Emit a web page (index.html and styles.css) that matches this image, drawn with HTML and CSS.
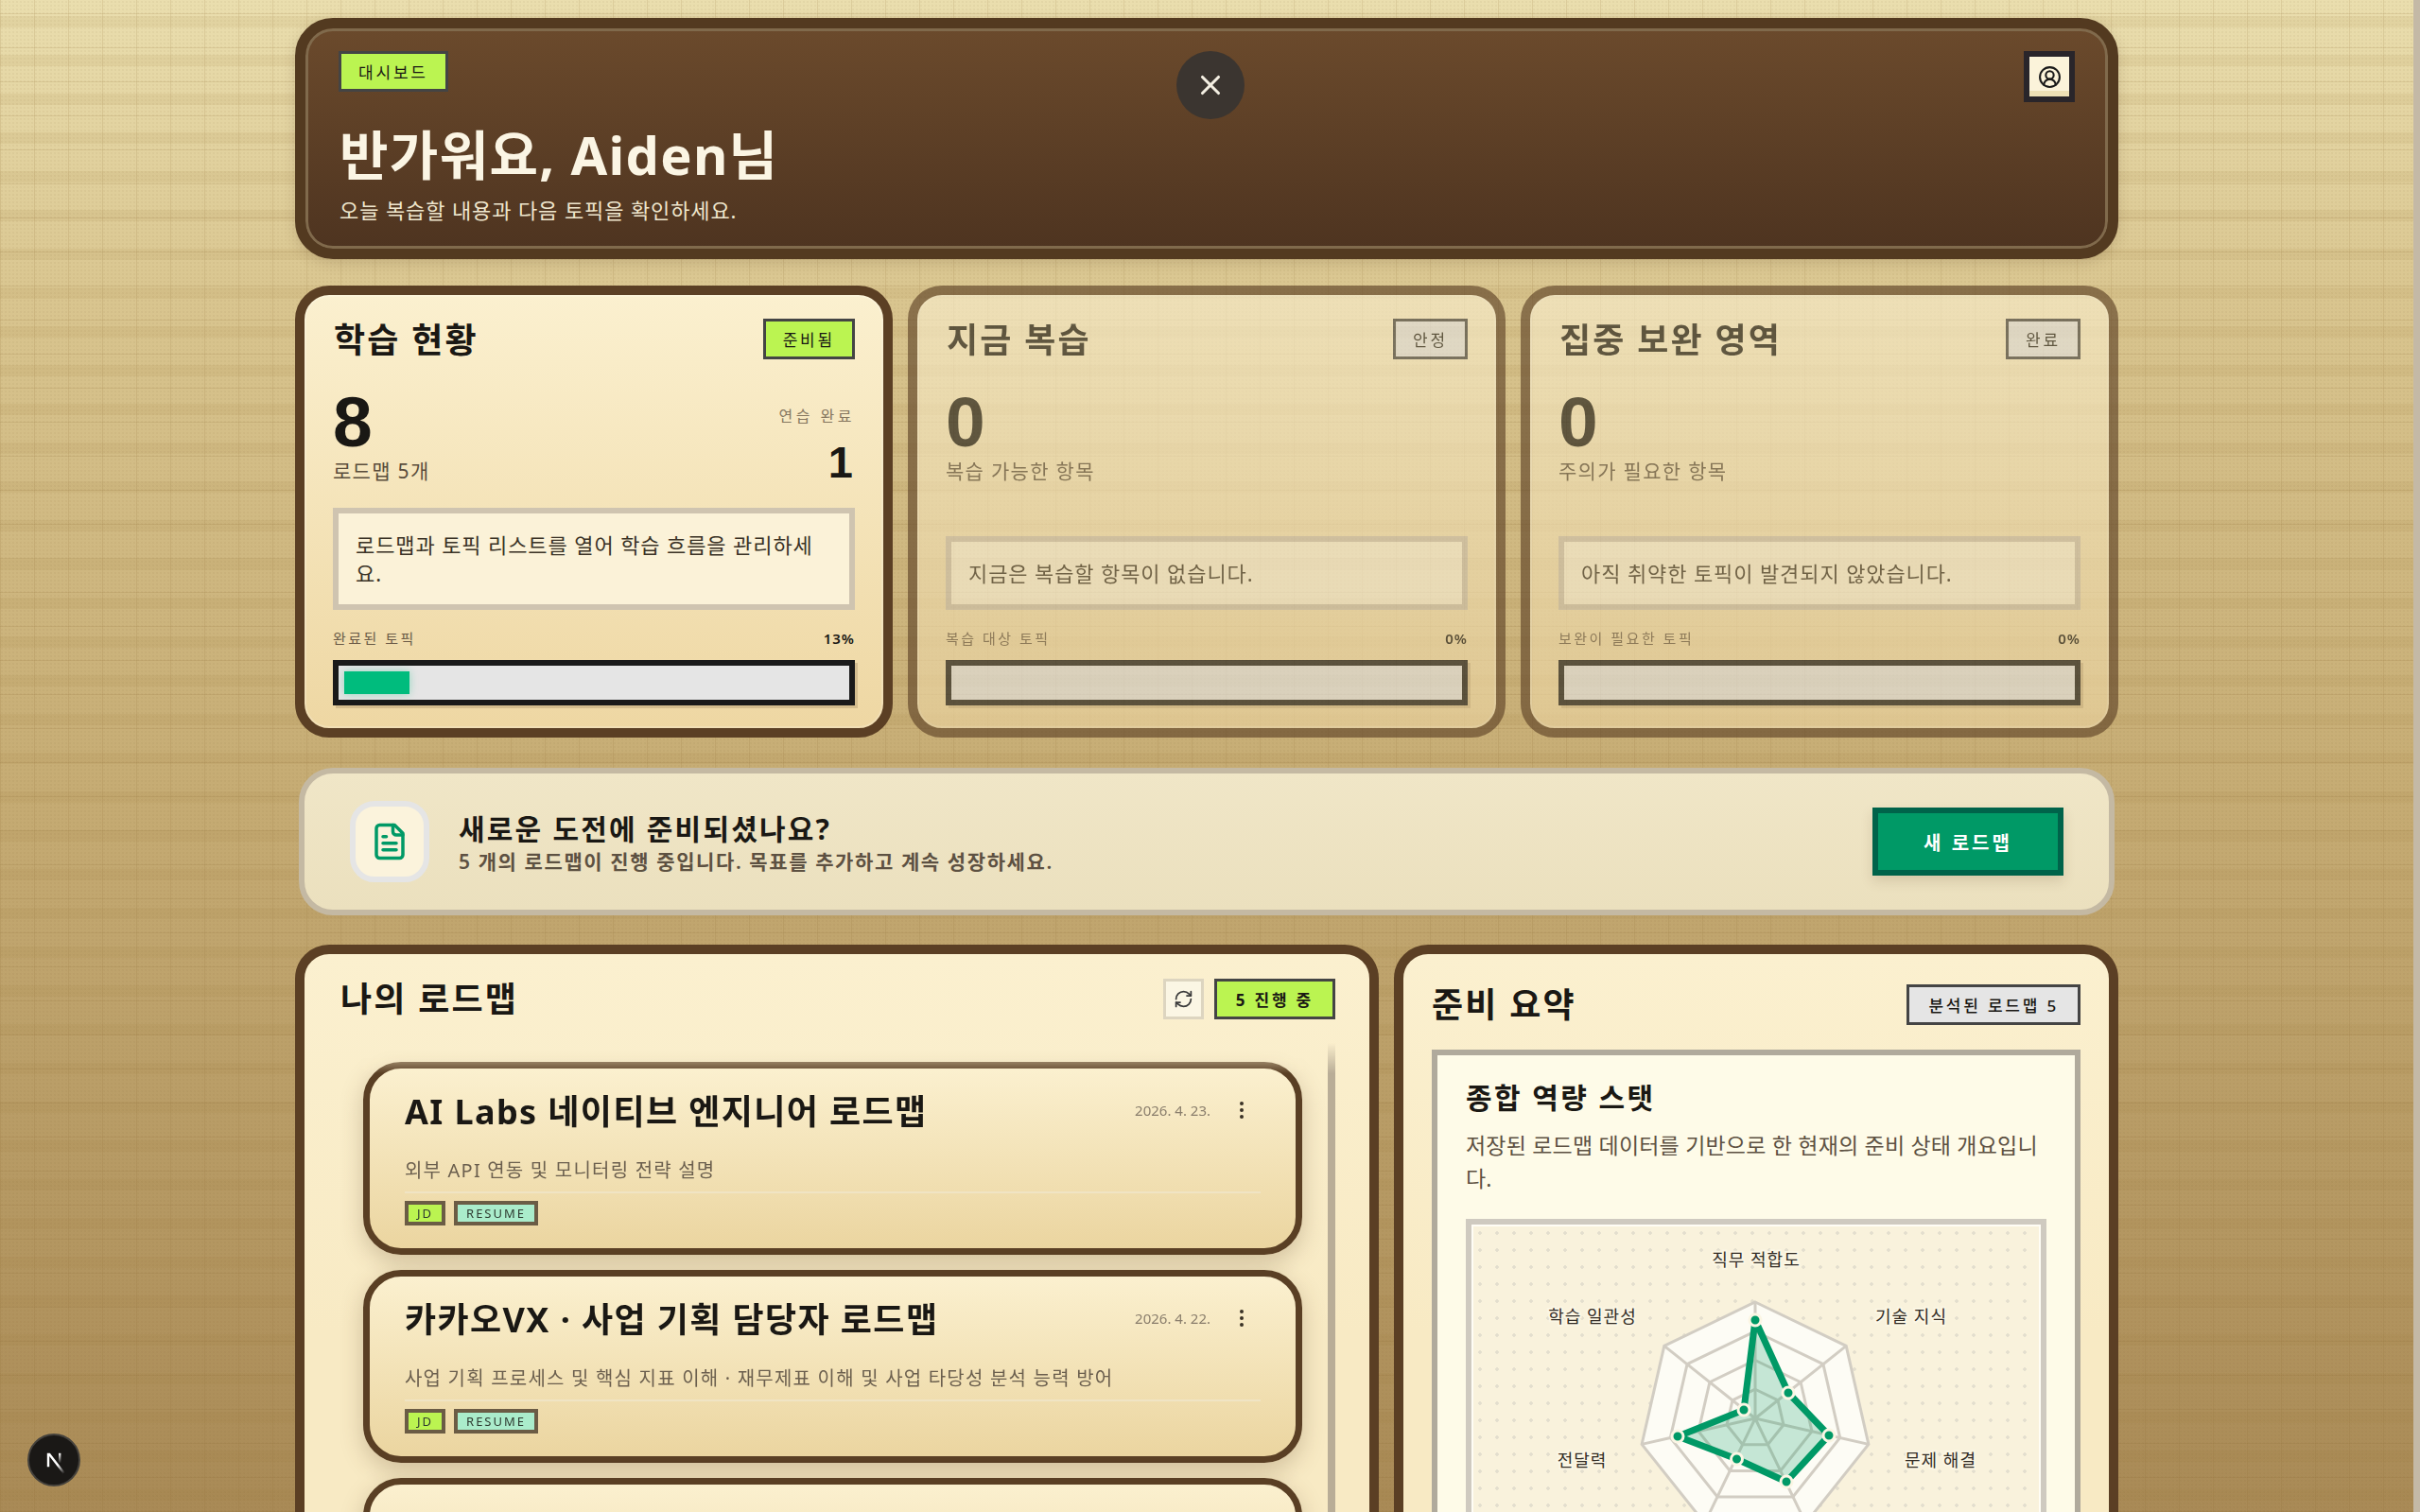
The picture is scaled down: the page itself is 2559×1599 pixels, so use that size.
FILE: index.html
```html
<!DOCTYPE HTML>
<html lang="ko">
<head>
    <meta charset="utf-8"/>
    <title>대시보드</title>
    <link rel="stylesheet" href="styles.css">
</head>
<body>
<div class="viewport">
    <div class="page">
        <header class="hero">
            <div>
                <span class="tag tag-lime">대시보드</span>
                <h1 class="hero-title">반가워요, Aiden님</h1>
                <p class="hero-sub">오늘 복습할 내용과 다음 토픽을 확인하세요.</p>
            </div>
            <button class="profile-btn" aria-label="프로필">
                <svg viewBox="0 0 24 24" width="25" height="25" fill="none" stroke="#1a1a1a" stroke-width="2" stroke-linecap="round" stroke-linejoin="round">
                    <path d="M18 20a6 6 0 0 0-12 0"/>
                    <circle cx="12" cy="10" r="4"/>
                    <circle cx="12" cy="12" r="10"/>
                </svg>
            </button>
        </header>

        <section class="stat-grid">
            <article class="stat-card">
                <div class="card-head">
                    <h2 class="card-title">학습 현황</h2>
                    <span class="tag tag-lime">준비됨</span>
                </div>
                <div class="stat-row">
                    <div>
                        <div class="big-num">8</div>
                        <div class="stat-label">로드맵 5개</div>
                    </div>
                    <div class="stat-side">
                        <div class="side-label">연습 완료</div>
                        <div class="side-num">1</div>
                    </div>
                </div>
                <p class="stat-msg">로드맵과 토픽 리스트를 열어 학습 흐름을 관리하세요.</p>
                <div class="progress-row"><span>완료된 토픽</span><b>13%</b></div>
                <div class="progress"><div class="progress-fill" style="width: 13%"></div></div>
            </article>

            <article class="stat-card is-muted">
                <div class="card-head">
                    <h2 class="card-title">지금 복습</h2>
                    <span class="tag tag-gray">안정</span>
                </div>
                <div class="stat-row">
                    <div>
                        <div class="big-num">0</div>
                        <div class="stat-label">복습 가능한 항목</div>
                    </div>
                </div>
                <p class="stat-msg">지금은 복습할 항목이 없습니다.</p>
                <div class="progress-row"><span>복습 대상 토픽</span><b>0%</b></div>
                <div class="progress"></div>
            </article>

            <article class="stat-card is-muted">
                <div class="card-head">
                    <h2 class="card-title">집중 보완 영역</h2>
                    <span class="tag tag-gray">완료</span>
                </div>
                <div class="stat-row">
                    <div>
                        <div class="big-num">0</div>
                        <div class="stat-label">주의가 필요한 항목</div>
                    </div>
                </div>
                <p class="stat-msg">아직 취약한 토픽이 발견되지 않았습니다.</p>
                <div class="progress-row"><span>보완이 필요한 토픽</span><b>0%</b></div>
                <div class="progress"></div>
            </article>
        </section>

        <section class="cta">
            <div class="cta-icon">
                <svg viewBox="0 0 24 24" width="42" height="42" fill="none" stroke="#009966" stroke-width="2" stroke-linecap="round" stroke-linejoin="round">
                    <path d="M15 2H6a2 2 0 0 0-2 2v16a2 2 0 0 0 2 2h12a2 2 0 0 0 2-2V7Z"/>
                    <path d="M14 2v4a2 2 0 0 0 2 2h4"/>
                    <path d="M10 9H8"/>
                    <path d="M16 13H8"/>
                    <path d="M16 17H8"/>
                </svg>
            </div>
            <div class="cta-text">
                <h2 class="cta-title">새로운 도전에 준비되셨나요?</h2>
                <p class="cta-sub">5 개의 로드맵이 진행 중입니다. 목표를 추가하고 계속 성장하세요.</p>
            </div>
            <button class="cta-btn">새 로드맵</button>
        </section>

        <section class="main-grid">
            <div class="panel panel-list">
                <div class="panel-head">
                    <h2 class="panel-title">나의 로드맵</h2>
                    <div class="panel-tools">
                        <button class="refresh-btn" aria-label="새로고침">
                            <svg viewBox="0 0 24 24" width="21" height="21" fill="none" stroke="#3a3a3a" stroke-width="2" stroke-linecap="round" stroke-linejoin="round">
                                <path d="M3 12a9 9 0 0 1 9-9 9.75 9.75 0 0 1 6.74 2.74L21 8"/>
                                <path d="M21 3v5h-5"/>
                                <path d="M21 12a9 9 0 0 1-9 9 9.75 9.75 0 0 1-6.74-2.74L3 16"/>
                                <path d="M8 16H3v5"/>
                            </svg>
                        </button>
                        <span class="tag tag-lime tag-bold">5 진행 중</span>
                    </div>
                </div>
                <div class="scroller">
                    <div class="roadmap-list">
                        <article class="roadmap">
                            <div class="roadmap-top">
                                <h3 class="roadmap-title">AI Labs 네이티브 엔지니어 로드맵</h3>
                                <div class="roadmap-meta">
                                    <span class="roadmap-date">2026. 4. 23.</span>
                                    <span class="dots"><i></i><i></i><i></i></span>
                                </div>
                            </div>
                            <p class="roadmap-desc">외부 API 연동 및 모니터링 전략 설명</p>
                            <div class="roadmap-tags">
                                <span class="mini-tag mini-jd">JD</span>
                                <span class="mini-tag mini-resume">RESUME</span>
                            </div>
                        </article>
                        <article class="roadmap">
                            <div class="roadmap-top">
                                <h3 class="roadmap-title">카카오VX · 사업 기획 담당자 로드맵</h3>
                                <div class="roadmap-meta">
                                    <span class="roadmap-date">2026. 4. 22.</span>
                                    <span class="dots"><i></i><i></i><i></i></span>
                                </div>
                            </div>
                            <p class="roadmap-desc">사업 기획 프로세스 및 핵심 지표 이해 · 재무제표 이해 및 사업 타당성 분석 능력 방어</p>
                            <div class="roadmap-tags">
                                <span class="mini-tag mini-jd">JD</span>
                                <span class="mini-tag mini-resume">RESUME</span>
                            </div>
                        </article>
                        <article class="roadmap roadmap-empty"></article>
                    </div>
                    <div class="scroll-track"></div>
                </div>
            </div>

            <div class="panel panel-summary">
                <div class="panel-head summary-head">
                    <h2 class="panel-title">준비 요약</h2>
                    <span class="tag tag-neutral">분석된 로드맵 5</span>
                </div>
                <div class="summary-box">
                    <h3 class="summary-title">종합 역량 스탯</h3>
                    <p class="summary-desc">저장된 로드맵 데이터를 기반으로 한 현재의 준비 상태 개요입니다.</p>
                    <div class="radar-box">
                        <svg class="radar" viewBox="0 0 602 470" width="602" height="470">
                            <polygon class="ring ring-outer" points="300,82 396.2,128.3 419.9,232.4 353.4,315.8 246.6,315.8 180.1,232.4 203.8,128.3"/>
                            <polygon class="ring" points="300,113 371.9,147.6 389.7,225.5 339.9,287.9 260.1,287.9 210.3,225.5 228.1,147.6"/>
                            <polygon class="ring" points="300,143.5 348.1,166.7 360,218.7 326.7,260.4 273.3,260.4 240,218.7 251.9,166.7"/>
                            <polygon class="ring" points="300,174.25 324,185.8 330,211.8 313.3,232.7 286.7,232.7 270,211.8 276,185.8"/>
                            <path class="ring" d="M300 205L300 82M300 205L396.2 128.3M300 205L419.9 232.4M300 205L353.4 315.8M300 205L246.6 315.8M300 205L180.1 232.4M300 205L203.8 128.3"/>
                            <polygon class="radar-shape" points="300,101 335,178 378,223 333,272 280.5,248 218,224 288,196"/>
                            <g class="radar-dots">
                                <circle cx="300" cy="101" r="6"/>
                                <circle cx="335" cy="178" r="6"/>
                                <circle cx="378" cy="223" r="6"/>
                                <circle cx="333" cy="272" r="6"/>
                                <circle cx="280.5" cy="248" r="6"/>
                                <circle cx="218" cy="224" r="6"/>
                                <circle cx="288" cy="196" r="6"/>
                            </g>
                            <g class="radar-labels">
                                <text x="301" y="44">직무 적합도</text>
                                <text x="465" y="104">기술 지식</text>
                                <text x="496" y="256">문제 해결</text>
                                <text x="117" y="256">전달력</text>
                                <text x="128" y="104">학습 일관성</text>
                            </g>
                        </svg>
                    </div>
                </div>
            </div>
        </section>
    </div>
    <div class="page-scrollbar"></div>
</div>

<button class="close-btn" aria-label="닫기">
    <svg viewBox="0 0 24 24" width="34" height="34" fill="none" stroke="#f4efe2" stroke-width="2.2" stroke-linecap="round" stroke-linejoin="round">
        <path d="M18 6 6 18"/>
        <path d="m6 6 12 12"/>
    </svg>
</button>

<div class="next-badge">
    <svg viewBox="0 0 180 180" width="36" height="36">
        <defs>
            <linearGradient id="nextA" x1="109" y1="116.5" x2="144.5" y2="160.5" gradientUnits="userSpaceOnUse">
                <stop stop-color="#fff"/>
                <stop offset="1" stop-color="#fff" stop-opacity="0"/>
            </linearGradient>
            <linearGradient id="nextB" x1="121" y1="54" x2="120.8" y2="106.9" gradientUnits="userSpaceOnUse">
                <stop stop-color="#fff"/>
                <stop offset="1" stop-color="#fff" stop-opacity="0"/>
            </linearGradient>
        </defs>
        <path fill="url(#nextA)" d="M149.508 157.52L69.142 54H54v71.97h12.114V69.384l73.885 95.461a90.304 90.304 0 0 0 9.509-7.325z"/>
        <rect fill="url(#nextB)" x="115" y="54" width="12" height="72"/>
    </svg>
</div>
</body>
</html>
```

FILE: styles.css
```css
* {
    box-sizing: border-box;
}

html, body {
    margin: 0;
    padding: 0;
    height: 1599px;
    overflow: hidden;
}

body {
    font-family: "Noto Sans", "Noto Sans CJK KR", sans-serif;
    color: #1a1814;
}

h1, h2, h3, p {
    margin: 0;
}

button {
    font: inherit;
    padding: 0;
}

.viewport {
    display: flex;
    height: 1599px;
    overflow: hidden;
    background:
        radial-gradient(circle, rgba(120, 90, 40, .06) 1px, transparent 1px) 0 0 / 4px 4px,
        repeating-linear-gradient(90deg, rgba(140, 105, 50, .15) 0 1px, transparent 1px 36px),
        repeating-linear-gradient(0deg, rgba(140, 105, 50, .15) 0 1px, transparent 1px 36px),
        repeating-linear-gradient(180deg, transparent 0 17px, rgba(150, 115, 50, .09) 17px 29px, transparent 29px 41px),
        linear-gradient(180deg, #eadeae 0%, #d9c58f 20%, #c6ac74 52%, #a98a56 100%);
}

.page {
    flex: 1;
    min-width: 0;
    padding: 19px 312px 0;
}

.page-scrollbar {
    width: 7px;
    background: #c4b9a6;
}

/* hero */
.hero {
    display: flex;
    justify-content: space-between;
    align-items: flex-start;
    height: 255px;
    padding: 24px 35px;
    border: 11px solid #533a20;
    border-radius: 40px;
    background: linear-gradient(180deg, #6b4a2c 0%, #4e3420 100%);
    box-shadow: inset 0 0 0 3px #806a4c, 0 4px 14px rgba(90, 63, 36, .18);
}

.hero-title {
    margin-top: 30px;
    padding-left: 1px;
    font-size: 56px;
    line-height: 72px;
    font-weight: 700;
    letter-spacing: 1.3px;
    color: #fbf5e4;
}

.hero-sub {
    margin-top: 7px;
    padding-left: 1px;
    font-size: 22px;
    line-height: 32px;
    letter-spacing: .9px;
    color: #efe6cd;
}

.profile-btn {
    display: flex;
    align-items: center;
    justify-content: center;
    width: 54px;
    height: 54px;
    border: 6px solid #29252a;
    background: linear-gradient(180deg, #fbf3da 0 85%, #eee0b5 85%);
}

.close-btn {
    position: fixed;
    top: 54px;
    left: 1244px;
    display: flex;
    align-items: center;
    justify-content: center;
    width: 72px;
    height: 72px;
    border: none;
    border-radius: 50%;
    background: #3b3530;
}

.next-badge {
    position: fixed;
    left: 29px;
    top: 1516px;
    display: flex;
    align-items: center;
    justify-content: center;
    width: 56px;
    height: 56px;
    border: 2px solid #45423d;
    border-radius: 50%;
    background: #1a1816;
}

/* tags */
.tag {
    display: inline-flex;
    align-items: center;
    justify-content: center;
    height: 43px;
    padding: 0 18px;
    border: 3px solid #444;
    font-size: 17px;
    letter-spacing: 2.8px;
    white-space: nowrap;
}

.tag-lime {
    background: #bbf451;
    color: #1a1814;
}

.tag-gray {
    background: #e5e5e5;
    color: #1a1814;
}

.tag-neutral {
    padding: 0 20px;
    background: #e5e5e5;
    color: #1a1814;
    font-weight: 500;
}

.tag-bold {
    padding: 0 20px;
    font-weight: 700;
}

/* stat cards */
.stat-grid {
    display: grid;
    grid-template-columns: repeat(3, 1fr);
    gap: 16px;
    margin-top: 28px;
}

.stat-card {
    display: flex;
    flex-direction: column;
    height: 478px;
    padding: 24px 30px;
    border: 10px solid #5b3f24;
    border-radius: 36px;
    background: linear-gradient(180deg, #fbf0cf 0%, #eed7a3 100%);
    box-shadow: inset 0 0 0 2px rgba(255, 255, 255, .2);
}

.stat-card.is-muted {
    opacity: .62;
}

.card-head {
    display: flex;
    justify-content: space-between;
    align-items: center;
}

.card-title {
    padding: 2px 0 0 1px;
    font-size: 36px;
    line-height: 43px;
    font-weight: 700;
    letter-spacing: 2.2px;
}

.stat-row {
    display: flex;
    justify-content: space-between;
    align-items: flex-end;
    margin-top: 29px;
}

.big-num {
    font-family: "Liberation Sans", "Noto Sans", sans-serif;
    font-size: 75px;
    line-height: 72px;
    font-weight: 700;
}

.stat-label {
    margin-top: 2px;
    font-size: 21px;
    line-height: 28px;
    letter-spacing: 1.3px;
    color: #5a4d3c;
}

.stat-side {
    text-align: right;
    transform: translateY(5px);
}

.side-label {
    font-size: 16px;
    letter-spacing: 3.5px;
    color: #85765f;
}

.side-num {
    margin-top: 10px;
    padding-right: 2px;
    font-family: "Liberation Sans", "Noto Sans", sans-serif;
    font-size: 47px;
    line-height: 56px;
    font-weight: 700;
}

.stat-msg {
    margin-top: auto;
    padding: 18px;
    border: 6px solid #cfc4b0;
    background: #fbf2d8;
    font-size: 22px;
    line-height: 30px;
    letter-spacing: .9px;
    color: #3a3226;
}

.progress-row {
    display: flex;
    justify-content: space-between;
    margin-top: 16px;
    font-size: 15px;
    line-height: 28px;
    letter-spacing: 2.5px;
    color: #6b5b47;
}

.progress-row b {
    font-weight: 600;
    letter-spacing: 1px;
    color: #1a1814;
}

.progress {
    height: 48px;
    margin-top: 9px;
    padding: 6px;
    border: 6px solid #1a1a1a;
    background: #e5e5e5;
    box-shadow: 3px 3px 0 rgba(90, 63, 36, .18);
}

.progress-fill {
    height: 100%;
    background: #00bc7d;
    box-shadow: 0 0 8px rgba(0, 188, 125, .35);
}

/* cta */
.cta {
    display: flex;
    align-items: center;
    height: 156px;
    margin: 32px 4px 0;
    padding: 0 48px;
    border: 6px solid #c4b9a3;
    border-radius: 36px;
    background: linear-gradient(180deg, #f0e6c7 0%, #ebe0be 100%);
}

.cta-icon {
    display: flex;
    align-items: center;
    justify-content: center;
    width: 84px;
    height: 86px;
    border: 6px solid #e5e5e5;
    border-radius: 26px;
    background: #fbf3dc;
}

.cta-text {
    flex: 1;
    margin-left: 31px;
    padding-top: 2px;
}

.cta-title {
    font-size: 30px;
    line-height: 40px;
    font-weight: 700;
    letter-spacing: 2.2px;
}

.cta-sub {
    font-size: 21px;
    line-height: 28px;
    font-weight: 600;
    letter-spacing: 1.6px;
    color: #5d5142;
}

.cta-btn {
    width: 202px;
    height: 72px;
    border: 6px solid #00634a;
    background: #009966;
    color: #fff;
    font-size: 20px;
    font-weight: 700;
    letter-spacing: 3px;
    box-shadow: 0 6px 12px rgba(90, 63, 36, .15);
}

/* panels */
.main-grid {
    display: grid;
    grid-template-columns: 3fr 2fr;
    gap: 16px;
    margin-top: 31px;
}

.panel {
    height: 900px;
    border: 10px solid #5b3f24;
    border-radius: 36px;
    background: linear-gradient(180deg, #fbf0cf 0, #f8eac4 400px);
}

.panel-head {
    display: flex;
    justify-content: space-between;
    align-items: center;
}

.panel-list {
    padding: 25px 36px 0 38px;
}

.panel-summary {
    padding: 31px 30px 0;
}

.panel-title {
    padding-top: 2px;
    font-size: 36px;
    line-height: 42px;
    font-weight: 700;
    letter-spacing: 2.2px;
}

.panel-tools {
    display: flex;
    gap: 11px;
}

.refresh-btn {
    display: flex;
    align-items: center;
    justify-content: center;
    width: 43px;
    height: 43px;
    border: 3px solid #ddd5c0;
    background: #fbf6e4;
}

.scroller {
    display: flex;
    margin-top: 25px;
    -webkit-mask-image: linear-gradient(180deg, transparent 0, #000 32px);
    mask-image: linear-gradient(180deg, transparent 0, #000 32px);
}

.roadmap-list {
    flex: 1;
    display: flex;
    flex-direction: column;
    gap: 16px;
    padding: 20px 27px 0 24px;
}

.scroll-track {
    width: 8px;
    background: #b9ad97;
}

.roadmap {
    height: 204px;
    padding: 21px 37px 0;
    border: 7px solid #5a3f24;
    border-radius: 40px;
    background: linear-gradient(180deg, #fbf0cf 0%, #ebd5a0 100%);
    box-shadow: 0 8px 24px rgba(90, 63, 36, .25);
}

.roadmap-top {
    display: flex;
    justify-content: space-between;
}

.roadmap-title {
    font-size: 36px;
    line-height: 50px;
    font-weight: 700;
    letter-spacing: 1.4px;
}

.roadmap-meta {
    display: flex;
    align-items: center;
    gap: 31px;
    height: 46px;
    padding-right: 18px;
}

.roadmap-date {
    font-size: 15px;
    color: #8a7e6c;
}

.dots {
    display: flex;
    flex-direction: column;
    gap: 3px;
}

.dots i {
    width: 4px;
    height: 4px;
    border-radius: 50%;
    background: #3a3226;
}

.roadmap-desc {
    margin-top: 22px;
    padding-bottom: 7px;
    border-bottom: 2px solid #f0e4c4;
    font-size: 20px;
    line-height: 30px;
    letter-spacing: 1.2px;
    color: #6b5f4e;
}

.roadmap-tags {
    display: flex;
    gap: 9px;
    margin-top: 8px;
}

.mini-tag {
    display: flex;
    align-items: center;
    height: 26px;
    padding: 0 9px;
    border: 4px solid #6b5c45;
    font-size: 13px;
    letter-spacing: 2px;
    color: #2e3a30;
}

.mini-jd {
    background: #bbf451;
}

.mini-resume {
    background: #aaeccb;
}

/* summary */
.summary-box {
    margin-top: 26px;
    padding: 26px 30px 0;
    height: 700px;
    border: 6px solid #b0aa9c;
    background: #fefbe8;
}

.summary-title {
    font-size: 30px;
    line-height: 38px;
    font-weight: 700;
    letter-spacing: 2.4px;
}

.summary-desc {
    margin-top: 14px;
    font-size: 23px;
    line-height: 35px;
    letter-spacing: .2px;
    color: #5d5142;
}

.radar-box {
    margin-top: 25px;
    border: 6px solid #cfcac0;
    background:
        radial-gradient(circle, #e3dece 1.5px, transparent 2px) 0 0 / 18px 18px,
        #f9f2dc;
    box-shadow: inset 0 0 0 2px #fffdf5;
}

.radar {
    display: block;
}

.ring {
    fill: none;
    stroke: #d2cdc3;
    stroke-width: 3;
}

.ring-outer {
    fill: #fdfcf5;
}

.radar-shape {
    fill: rgba(0, 153, 102, .22);
    stroke: #009966;
    stroke-width: 7;
    stroke-linejoin: round;
}

.radar-dots circle {
    fill: #009966;
    stroke: #fbf6e4;
    stroke-width: 3;
}

.radar-labels text {
    font-size: 18px;
    letter-spacing: 1px;
    text-anchor: middle;
    fill: #332d26;
    stroke: #fbf6e4;
    stroke-width: 4px;
    paint-order: stroke;
}
```
